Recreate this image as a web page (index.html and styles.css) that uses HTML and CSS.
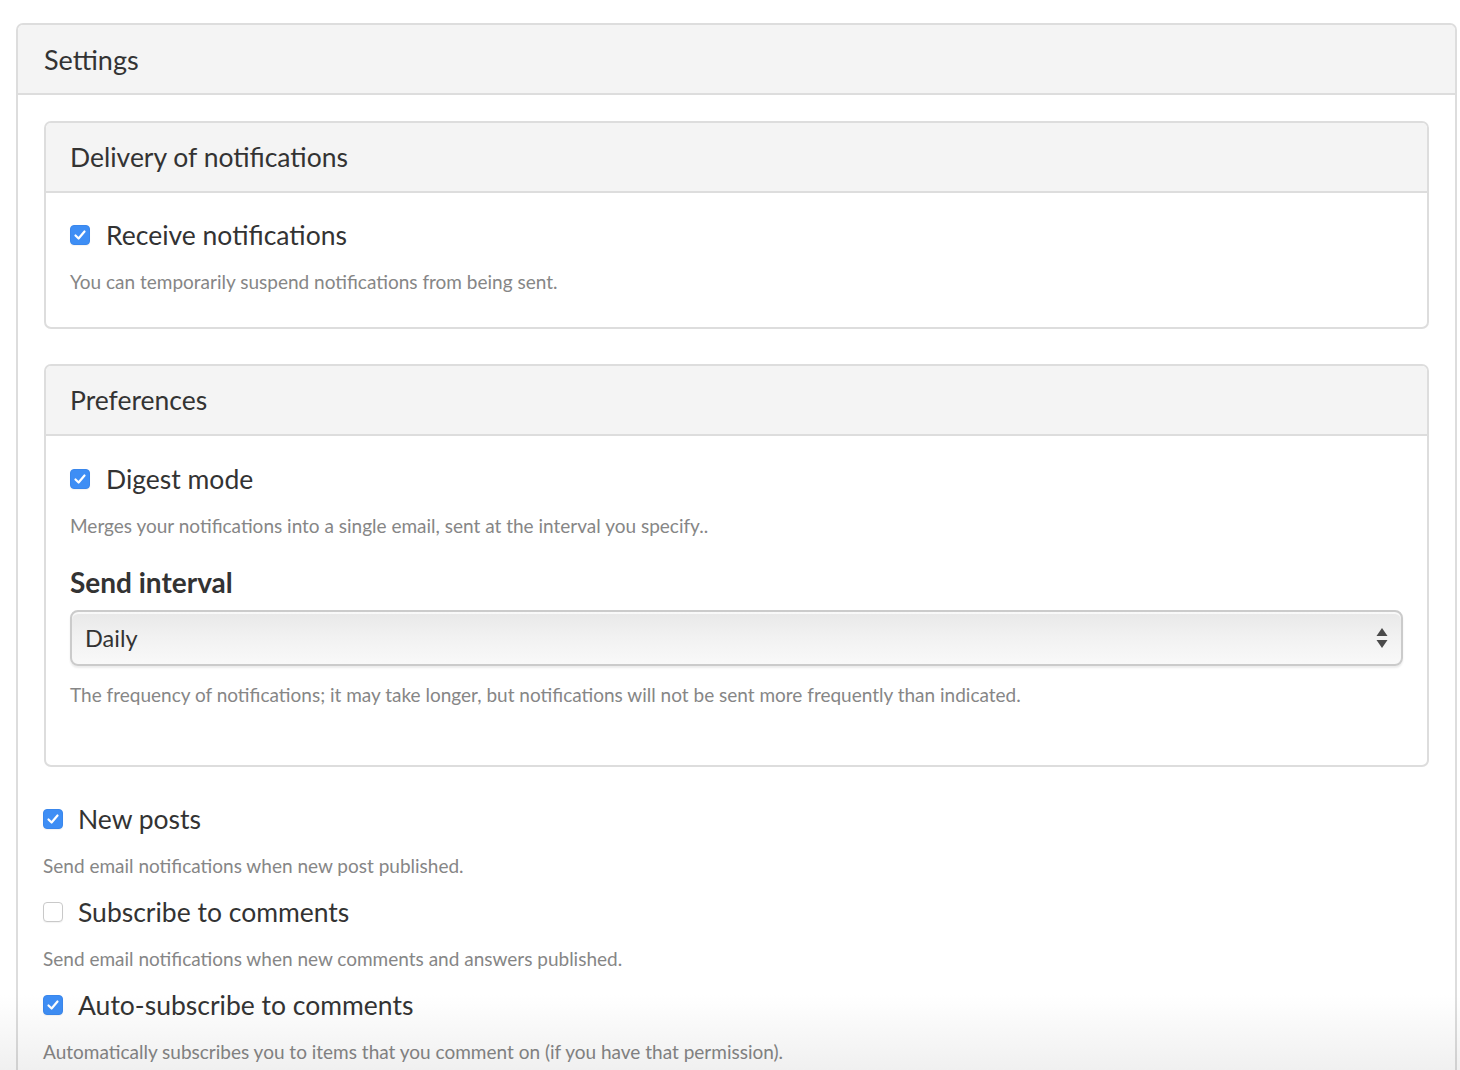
FILE: index.html
```html
<!DOCTYPE html>
<html lang="en">
<head>
<meta charset="utf-8">
<title>Settings</title>
<link rel="stylesheet" href="styles.css">
</head>
<body>
<div class="panel outer">
  <div class="panel-heading">Settings</div>
  <div class="outer-body">
    <div class="panel">
      <div class="panel-heading">Delivery of notifications</div>
      <div class="panel-body first">
        <label class="check-row">
          <span class="cb checked"><svg viewBox="0 0 20 20" width="20" height="20"><path d="M5.5 10.5 L8.6 13.5 L14.5 6.5" fill="none" stroke="#fff" stroke-width="2.2" stroke-linecap="round" stroke-linejoin="round"/></svg></span>
          <span class="label-text">Receive notifications</span>
        </label>
        <p class="help">You can temporarily suspend notifications from being sent.</p>
      </div>
    </div>

    <div class="panel second">
      <div class="panel-heading">Preferences</div>
      <div class="panel-body prefs">
        <label class="check-row">
          <span class="cb checked"><svg viewBox="0 0 20 20" width="20" height="20"><path d="M5.5 10.5 L8.6 13.5 L14.5 6.5" fill="none" stroke="#fff" stroke-width="2.2" stroke-linecap="round" stroke-linejoin="round"/></svg></span>
          <span class="label-text">Digest mode</span>
        </label>
        <p class="help">Merges your notifications into a single email, sent at the interval you specify..</p>
        <div class="field-label">Send interval</div>
        <div class="select">
          <span class="select-value">Daily</span>
          <svg class="select-arrows" viewBox="0 0 12 22" width="12" height="22"><path d="M6 1 L11.5 9 L0.5 9 Z" fill="#4a4a4a"/><path d="M6 21 L11.5 13 L0.5 13 Z" fill="#4a4a4a"/></svg>
        </div>
        <p class="help after-select">The frequency of notifications; it may take longer, but notifications will not be sent more frequently than indicated.</p>
      </div>
    </div>

    <div class="loose">
      <label class="check-row">
        <span class="cb checked"><svg viewBox="0 0 20 20" width="20" height="20"><path d="M5.5 10.5 L8.6 13.5 L14.5 6.5" fill="none" stroke="#fff" stroke-width="2.2" stroke-linecap="round" stroke-linejoin="round"/></svg></span>
        <span class="label-text">New posts</span>
      </label>
      <p class="help">Send email notifications when new post published.</p>
      <label class="check-row">
        <span class="cb"></span>
        <span class="label-text">Subscribe to comments</span>
      </label>
      <p class="help">Send email notifications when new comments and answers published.</p>
      <label class="check-row">
        <span class="cb checked"><svg viewBox="0 0 20 20" width="20" height="20"><path d="M5.5 10.5 L8.6 13.5 L14.5 6.5" fill="none" stroke="#fff" stroke-width="2.2" stroke-linecap="round" stroke-linejoin="round"/></svg></span>
        <span class="label-text">Auto-subscribe to comments</span>
      </label>
      <p class="help">Automatically subscribes you to items that you comment on (if you have that permission).</p>
    </div>
  </div>
</div>
<div class="fade"></div>
</body>
</html>
```

FILE: styles.css
```css
html, body {
  background: #fff;
}
body {
  margin: 0;
  padding: 23px 3px 0 16px;
  font-family: Lato, "Open Sans", sans-serif;
  color: #333;
  overflow: hidden;
  height: 1047px;
}
.panel {
  border: 2px solid #ddd;
  border-radius: 7px;
  background: #fff;
}
.outer {
  border-bottom: none;
  border-bottom-left-radius: 0;
  border-bottom-right-radius: 0;
  min-height: 1100px;
}
.panel-heading {
  height: 68px;
  display: flex;
  align-items: center;
  padding: 0 24px;
  background: #f4f4f4;
  border-bottom: 2px solid #ddd;
  border-radius: 5px 5px 0 0;
  font-size: 26.5px;
  color: #333;
}
.outer > .panel-heading {
  padding: 0 26px;
  font-size: 27px;
}
.outer-body {
  padding: 26px 26px 0 26px;
}
.panel-body {
  padding: 22px 24px 19px 24px;
}
.panel-body.prefs {
  padding: 23px 24px 56px 24px;
}
.panel.second {
  margin-top: 35px;
}
.check-row {
  display: flex;
  align-items: center;
  height: 40px;
}
.cb {
  width: 20px;
  height: 20px;
  box-sizing: border-box;
  border-radius: 4px;
  border: 1.5px solid #c9c9c9;
  background: #fff;
  flex: none;
  margin-right: 16px;
  display: flex;
  box-shadow: 0 1px 1px rgba(0,0,0,0.05);
}
.cb.checked {
  background: #3e8ef5;
  border-color: #3a87ec;
}
.cb svg {
  display: block;
  margin: -1.5px;
}
.label-text {
  font-size: 26.5px;
  color: #333;
}
.help {
  margin: 13px 0 12px 0;
  font-size: 19px;
  line-height: 28px;
  color: #868686;
}
.field-label {
  font-size: 28px;
  font-weight: bold;
  line-height: 40px;
  margin: 22px 0 8px 0;
  color: #333;
}
.select {
  height: 56px;
  box-sizing: border-box;
  border: 2px solid #cbcbcb;
  border-radius: 8px;
  background: linear-gradient(to bottom, #e8e8e8 0%, #f1f1f1 45%, #f9f9f9 100%);
  box-shadow: inset 0 2px 0 rgba(255,255,255,0.7), 0 2px 2px rgba(0,0,0,0.08);
  display: flex;
  align-items: center;
  justify-content: space-between;
  padding: 0 13px 0 13px;
}
.select-value {
  font-size: 23.5px;
  color: #333;
}
.select-arrows {
  display: block;
}
.help.after-select {
  margin-top: 15px;
  margin-bottom: 0;
}
.loose {
  margin-top: 32px;
}
.loose .cb {
  margin-left: -1px;
  margin-right: 15px;
}
.loose .help {
  margin-left: -1px;
}
.fade {
  position: fixed;
  left: 0;
  right: 0;
  bottom: 0;
  height: 75px;
  background: linear-gradient(to bottom, rgb(255,255,255) 0%, rgb(240,240,240) 100%);
  mix-blend-mode: multiply;
  pointer-events: none;
}
```
